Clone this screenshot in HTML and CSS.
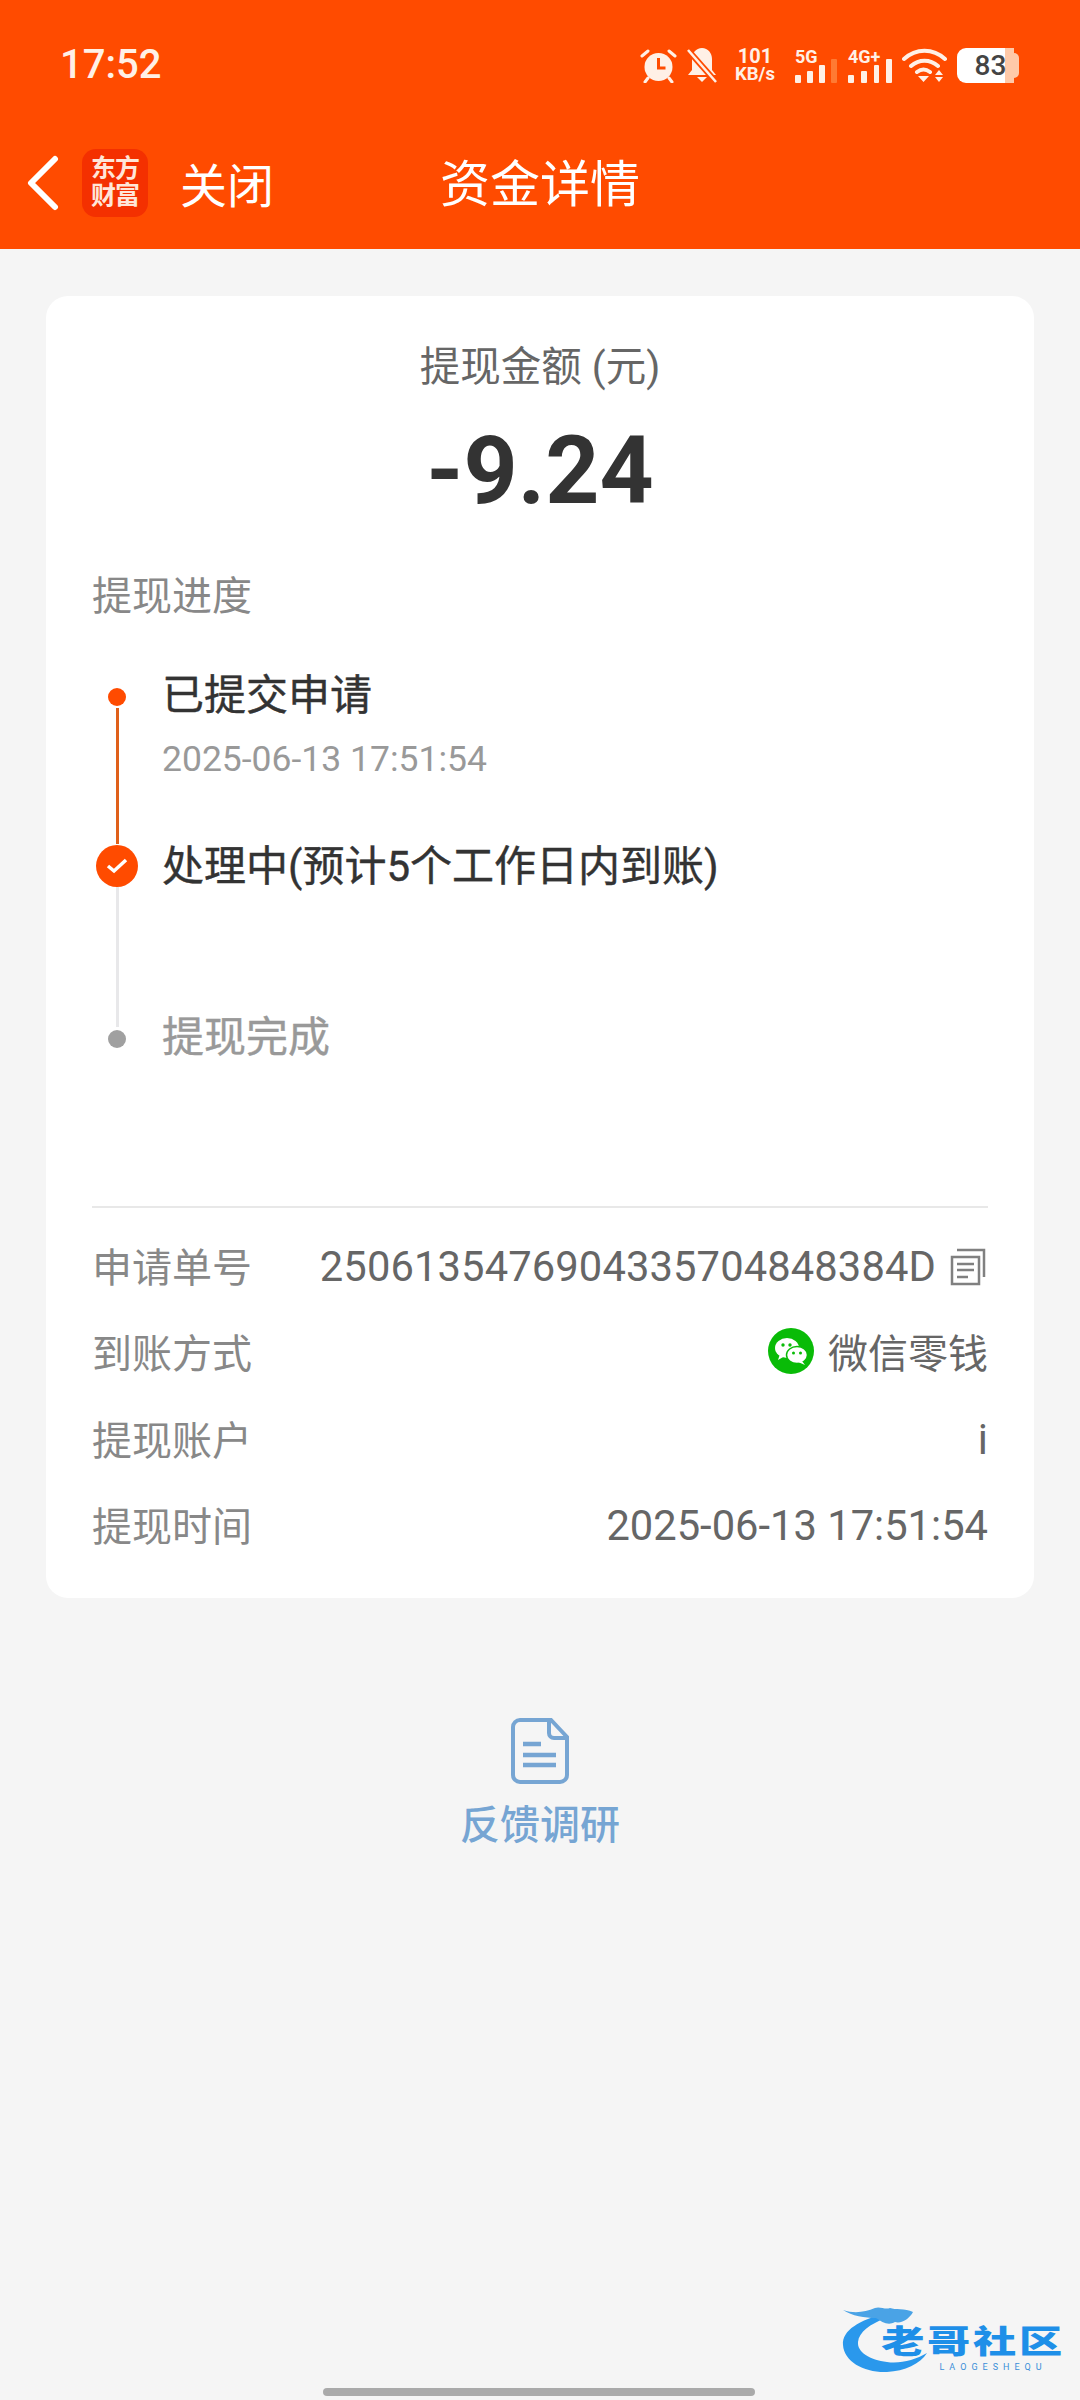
FILE: index.html
```html
<!DOCTYPE html>
<html lang="zh-CN">
<head>
  <meta charset="UTF-8">
  <meta name="viewport" content="width=device-width, initial-scale=1.0">
  <title>资金详情</title>
  <link rel="stylesheet" href="styles.css">
</head>
<body>
  <div class="header">
    <div class="statusbar">
      <span class="time">17:52</span>
      <div class="status-icons">
        <svg class="ic-alarm" width="37" height="35" viewBox="0 0 37 35">
          <circle cx="18.500" cy="19" r="14" fill="#fff0e6"/>
          <path d="M18.500 10v10h7" fill="none" stroke="#ff4b00" stroke-width="3"/>
          <path d="M2 8l6-5M35 8l-6-5M8 30l-3 4M29 30l3 4" stroke="#fff0e6" stroke-width="3" stroke-linecap="round"/>
        </svg>
        <svg class="ic-bell" width="30" height="35" viewBox="0 0 30 35">
          <path d="M15 0c6 0 10 5 10 11v11l4 5H1l4-5V11C5 5 9 0 15 0z" fill="#fff0e6"/>
          <path d="M10 29h10l-5 5z" fill="#fff0e6"/>
          <path d="M0 1l29 33" stroke="#ff4b00" stroke-width="6"/>
          <path d="M1 2l28 32" stroke="#fff0e6" stroke-width="2.500"/>
        </svg>
        <div class="speed"><b>101</b><b class="unit">KB/s</b></div>
        <div class="signal sig-5g">
          <span class="net">5G</span>
          <div class="bars"><i class="b1"></i><i class="b2"></i><i class="b3"></i><i class="b4 off"></i></div>
        </div>
        <div class="signal sig-4g">
          <span class="net">4G+</span>
          <div class="bars"><i class="b1"></i><i class="b2"></i><i class="b3"></i><i class="b4"></i></div>
        </div>
        <svg class="ic-wifi" width="45" height="35" viewBox="0 0 45 35">
          <path d="M2 11c12-11 29-11 41 0M9 18c8-7 19-7 27 0M15 24c4-3 9-3 13 0" fill="none" stroke="#fff0e6" stroke-width="4" stroke-linecap="round"/>
          <path d="M16 28h11l-5.500 6zM33 27l4-5 4 5zM33 29h8l-4 5z" fill="#fff0e6"/>
        </svg>
        <div class="battery"><span class="level">83</span><i class="cap"></i></div>
      </div>
    </div>
    <div class="navbar">
      <svg class="back" width="36" height="56" viewBox="0 0 36 56">
        <path d="M30 4L6 28l24 24" fill="none" stroke="#fff" stroke-width="6" stroke-linecap="round" stroke-linejoin="round"/>
      </svg>
      <div class="app-logo">东方<br>财富</div>
      <span class="close">关闭</span>
      <span class="nav-title">资金详情</span>
    </div>
  </div>

  <div class="card">
    <div class="amount-label">提现金额 (元)</div>
    <div class="amount">-9.24</div>
    <div class="section-title">提现进度</div>

    <div class="timeline">
      <div class="step">
        <div class="rail">
          <span class="dot"></span>
          <span class="line line-done"></span>
        </div>
        <div class="step-body">
          <div class="step-title">已提交申请</div>
          <div class="step-time">2025-06-13 17:51:54</div>
        </div>
      </div>
      <div class="step">
        <div class="rail">
          <span class="dot-current">
            <svg width="22" height="16" viewBox="0 0 22 16"><path d="M2 8l6 5L20 2" fill="none" stroke="#fff" stroke-width="3.500"/></svg>
          </span>
          <span class="line line-todo"></span>
        </div>
        <div class="step-body">
          <div class="step-title">处理中(预计5个工作日内到账)</div>
        </div>
      </div>
      <div class="step step-last">
        <div class="rail">
          <span class="dot dot-grey"></span>
        </div>
        <div class="step-body">
          <div class="step-title step-todo">提现完成</div>
        </div>
      </div>
    </div>

    <div class="info">
      <div class="info-row">
        <span class="info-key">申请单号</span>
        <span class="info-val val-num val-order">2506135476904335704848384D
          <svg class="ic-copy" width="36" height="38" viewBox="0 0 36 38">
            <path d="M2 9h27v27H2z" fill="none" stroke="#808080" stroke-width="2.500"/>
            <path d="M7 2h27v27" fill="none" stroke="#808080" stroke-width="2.500"/>
            <path d="M7 16h17M7 22h17M7 29h11" stroke="#808080" stroke-width="2.500"/>
          </svg>
        </span>
      </div>
      <div class="info-row">
        <span class="info-key">到账方式</span>
        <span class="info-val">
          <svg class="ic-wechat" width="46" height="46" viewBox="0 0 46 46">
            <circle cx="23" cy="23" r="23" fill="#09bb07"/>
            <ellipse cx="19" cy="20" rx="12" ry="10" fill="#fff"/>
            <path d="M12 26l-2 6 7-4z" fill="#fff"/>
            <ellipse cx="29" cy="27" rx="10.500" ry="8.500" fill="#fff" stroke="#09bb07" stroke-width="1.500"/>
            <path d="M34 33l3 4-7-3z" fill="#fff"/>
            <circle cx="15" cy="17" r="1.700" fill="#09bb07"/>
            <circle cx="22" cy="17" r="1.700" fill="#09bb07"/>
            <circle cx="25.500" cy="25" r="1.500" fill="#09bb07"/>
            <circle cx="32.500" cy="25" r="1.500" fill="#09bb07"/>
          </svg>
          微信零钱
        </span>
      </div>
      <div class="info-row">
        <span class="info-key">提现账户</span>
        <span class="info-val val-num">i</span>
      </div>
      <div class="info-row">
        <span class="info-key">提现时间</span>
        <span class="info-val val-num">2025-06-13 17:51:54</span>
      </div>
    </div>
  </div>

  <div class="feedback">
    <svg width="58" height="66" viewBox="0 0 58 66">
      <path d="M9 2h31l16 17v38a7 7 0 0 1-7 7H9a7 7 0 0 1-7-7V9a7 7 0 0 1 7-7z" fill="none" stroke="#76a5d3" stroke-width="4"/>
      <path d="M38 3v12a5 5 0 0 0 5 5h12" fill="none" stroke="#76a5d3" stroke-width="4"/>
      <path d="M12 26h18M12 37h33M12 47h33" stroke="#76a5d3" stroke-width="4.500"/>
    </svg>
    <span class="feedback-text">反馈调研</span>
  </div>

  <div class="watermark">
    <svg class="dragon" width="90" height="76" viewBox="0 0 90 76">
      <path d="M44 14C20 20 2 30 3 45c1 17 22 28 44 27 18-1 33-8 40-19-12 7-27 11-40 9C30 60 17 52 18 42c1-10 12-18 28-24z" fill="#2a98ec"/>
      <path d="M3 10c12 4 22 2 32-2 5-2 10 2 15 0 5 2 15 0 23 4-3 6-11 12-18 10-7 4-13 0-19-4C25 18 12 16 3 10z" fill="#4aa3e6"/>
    </svg>
    <div class="wm-text">
      <span class="wm-cn">老哥社区</span>
      <span class="wm-en">LAOGESHEQU</span>
    </div>
  </div>
  <div class="home-bar"></div>
</body>
</html>
```

FILE: styles.css
```css
* {
  box-sizing: border-box;
}
body {
  margin: 0;
  width: 1080px;
  height: 2400px;
  position: relative;
  overflow: hidden;
  background-color: #f5f5f5;
  font-family: Roboto, "Noto Sans CJK SC", sans-serif;
  color: #333;
}

/* header */
.header {
  height: 249px;
  background-color: #ff4b00;
  color: #fff;
}
.statusbar {
  height: 130px;
  padding: 44px 61px 0 60px;
  display: flex;
  justify-content: space-between;
  align-items: flex-start;
}
.time {
  font-size: 40px;
  font-weight: 500;
  line-height: 42px;
  color: #fff0e6;
}
.status-icons {
  display: flex;
  align-items: center;
  height: 42px;
}
.ic-bell {
  margin-left: 10px;
}
.speed {
  width: 44px;
  display: flex;
  flex-direction: column;
  align-items: center;
  margin-left: 16px;
  font-size: 20px;
  line-height: 18px;
  color: #fff0e6;
}
.speed .unit {
  font-size: 18.500px;
}
.signal {
  display: flex;
  flex-direction: column;
  color: #fff0e6;
}
.sig-5g {
  width: 42px;
  margin-left: 18px;
}
.sig-4g {
  width: 44px;
  margin-left: 11px;
}
.net {
  font-size: 18px;
  font-weight: 700;
  line-height: 18px;
  height: 10px;
}
.bars {
  display: flex;
  align-items: flex-end;
  gap: 6px;
  height: 25px;
}
.sig-4g .bars {
  gap: 7px;
}
.bars i {
  width: 6px;
  background-color: #fff0e6;
  border-radius: 1px;
}
.bars .b1 { height: 8px; }
.bars .b2 { height: 12px; }
.bars .b3 { height: 18px; }
.bars .b4 { height: 24px; }
.bars .off {
  background-color: #ff7a33;
}
.ic-wifi {
  margin-left: 10px;
}
.battery {
  display: flex;
  align-items: center;
  margin-left: 10px;
}
.level {
  width: 57px;
  height: 35px;
  padding-left: 10px;
  background: linear-gradient(to right, #fff 85%, #ffc9a8 85%);
  border-radius: 9px 0 0 9px;
  color: #444;
  font-size: 28px;
  font-weight: 500;
  line-height: 35px;
  text-align: center;
}
.cap {
  width: 5px;
  height: 25px;
  background-color: #ffc9a8;
  border-radius: 0 6px 6px 0;
}
.navbar {
  height: 119px;
  position: relative;
  display: flex;
  align-items: center;
  padding: 0 0 14px 25px;
}
.app-logo {
  width: 66px;
  height: 68px;
  margin-left: 21px;
  background-color: #f43000;
  border-radius: 14px;
  font-size: 25px;
  font-weight: 700;
  line-height: 27px;
  letter-spacing: -1px;
  text-align: center;
  padding-top: 6px;
  color: #ffe6d8;
}
.close {
  margin-left: 32px;
  font-size: 47px;
}
.nav-title {
  position: absolute;
  left: 0;
  right: 0;
  top: 23px;
  text-align: center;
  font-size: 50px;
  line-height: 64px;
}

/* card */
.card {
  margin: 47px 46px 0;
  height: 1302px;
  padding: 44px 46px 0;
  background-color: #fff;
  border-radius: 22px;
}
.amount-label {
  text-align: center;
  font-size: 40.500px;
  line-height: 54px;
  color: #666;
}
.amount {
  text-align: center;
  font-size: 94.500px;
  font-weight: 700;
  line-height: 112px;
  margin-top: 21px;
}
.section-title {
  margin-top: 43px;
  font-size: 40px;
  line-height: 54px;
  color: #888;
}

/* timeline */
.timeline {
  margin-top: 49px;
}
.step {
  display: flex;
  height: 171px;
}
.step-last {
  height: 46px;
}
.rail {
  width: 72px;
  padding-left: 4px;
  padding-right: 22px;
  margin-left: -2px;
  display: flex;
  flex-direction: column;
  align-items: center;
}
.dot {
  width: 18px;
  height: 18px;
  margin-top: 15px;
  border-radius: 50%;
  background-color: #ff4b00;
  flex-shrink: 0;
}
.dot-grey {
  background-color: #a0a0a0;
}
.dot-current {
  width: 42px;
  height: 42px;
  margin-top: 1px;
  border-radius: 50%;
  background-color: #ff4b00;
  display: flex;
  align-items: center;
  justify-content: center;
  flex-shrink: 0;
}
.line {
  width: 3px;
  flex: 1;
}
.line-done {
  background-color: #e0601a;
  margin-top: 2px;
}
.line-todo {
  background-color: #e8e8ea;
  margin-bottom: -12px;
}
.step-title {
  font-size: 42px;
  line-height: 46px;
  color: #333;
  -webkit-text-stroke: 0.4px #333;
}
.step-todo {
  color: #999;
  -webkit-text-stroke: 0.4px #999;
}
.step-time {
  margin-top: 18px;
  font-size: 35.500px;
  line-height: 44px;
  color: #999;
}

/* details */
.info {
  margin-top: 145px;
  border-top: 2px solid #e8e8e8;
  padding-top: 14px;
}
.info-row {
  height: 86.300px;
  display: flex;
  align-items: center;
  justify-content: space-between;
  font-size: 40px;
}
.info-key {
  color: #888;
}
.info-val {
  display: flex;
  align-items: center;
  color: #666;
}
.val-num {
  font-size: 41.700px;
  padding-top: 3px;
}
.val-order {
  letter-spacing: 0.12px;
}
.ic-copy {
  margin-left: 14px;
  margin-right: 2px;
}
.ic-wechat {
  margin-right: 14px;
}

/* feedback */
.feedback {
  margin-top: 120px;
  display: flex;
  flex-direction: column;
  align-items: center;
  gap: 15px;
}
.feedback-text {
  font-size: 40px;
  line-height: 54px;
  font-weight: 500;
  color: #76a5d3;
}

/* overlays */
.watermark {
  position: absolute;
  left: 840px;
  top: 2300px;
  width: 230px;
  height: 76px;
}
.wm-text {
  position: absolute;
  left: 43px;
  top: 22px;
  width: 180px;
  display: flex;
  flex-direction: column;
  align-items: center;
}
.wm-cn {
  font-size: 32px;
  line-height: 40px;
  font-weight: 900;
  letter-spacing: 2px;
  color: #1e8fe8;
  transform: scaleX(1.350);
  white-space: nowrap;
}
.wm-en {
  font-size: 9px;
  line-height: 10px;
  letter-spacing: 5px;
  margin-left: 40px;
  color: #3a8fd8;
}
.home-bar {
  position: absolute;
  left: 323px;
  bottom: 4px;
  width: 432px;
  height: 8px;
  border-radius: 4px;
  background-color: #aaa;
}
```
